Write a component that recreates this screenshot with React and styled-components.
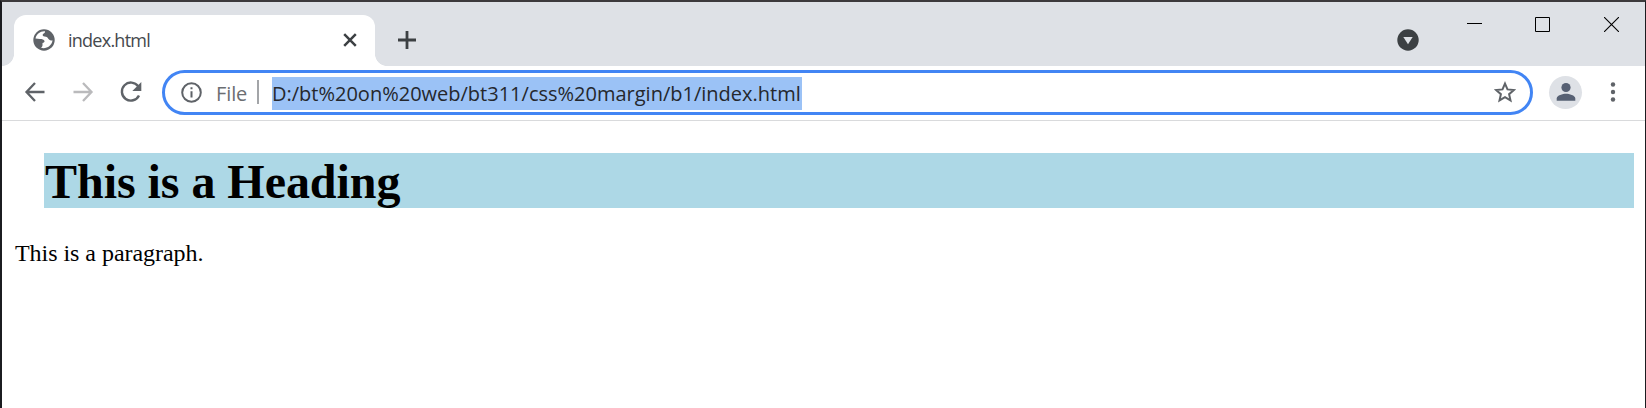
import React from "react";
import styled, { createGlobalStyle } from "styled-components";

const Global = createGlobalStyle`
  * { box-sizing: border-box; }
  body { margin: 0; background: #fff; }
`;
const ui = `"Open Sans", "Noto Sans", sans-serif`;

const Window = styled.div`
  height: 408px;
  display: flex;
  flex-direction: column;
  background: #fff;
  border: solid #1b1c20;
  border-width: 2px 1px 0 2px;
  border-top-color: #3c3a3c;
  overflow: hidden;
`;
const TabStrip = styled.header`
  height: 64px;
  display: flex;
  align-items: flex-end;
  background: #dee1e6;
`;
const Foot = styled.div`
  width: 12px;
  height: 12px;
  background: radial-gradient(circle at ${p => (p.$right ? "100%" : "0")} 0, transparent 11.6px, #fff 12.2px);
`;
const Tab = styled.div`
  width: 361px;
  height: 51px;
  padding: 0 18px 2px 18px;
  display: flex;
  align-items: center;
  background: #fff;
  border-radius: 12px 12px 0 0;
`;
const TabTitle = styled.span`
  flex: 1;
  margin-left: 12px;
  font: 18px/24px ${ui};
  letter-spacing: ${p => p.$track};
  color: #45494d;
`;
const NewTab = styled.div`
  margin-left: 8px;
  height: 51px;
  padding-bottom: 1px;
  display: flex;
  align-items: center;
`;
const Controls = styled.div`
  margin-left: auto;
  height: 64px;
  display: flex;
`;
const TabSearch = styled.div`
  padding: 27px 48px 0 0;
`;
const Control = styled.div`
  width: 15px;
  margin-right: ${p => p.$gap}px;
  padding-top: 15px;
`;
const Icon = styled.svg`
  display: block;
  flex: none;
`;
const Toolbar = styled.div`
  height: 55px;
  padding: 4px 29px 6px 22px;
  display: flex;
  align-items: center;
  border-bottom: 1px solid #d9dadc;
`;
const Nav = styled.div`
  display: flex;
  gap: 26px;
  margin-right: 20px;
`;
const Omnibox = styled.div`
  flex: 1;
  height: 45px;
  padding: 0 14px 0 16px;
  display: flex;
  align-items: center;
  border: 3px solid #4285f4;
  border-radius: 23px;
`;
const Scheme = styled.span`
  width: 31px;
  margin: 2px 0 0 14px;
  white-space: nowrap;
  font: 20px/33px ${ui};
  letter-spacing: ${p => p.$track};
  color: #6b6e72;
`;
const Divider = styled.span`
  width: 2px;
  height: 24px;
  margin: 0 13px 0 10px;
  background: #a3a5a8;
`;
const Url = styled.span`
  height: 33px;
  width: 530px;
  margin: 2px auto 0 0;
  white-space: nowrap;
  font: 20px/33px ${ui};
  letter-spacing: ${p => p.$track};
  background: #9bc2f6;
  color: #25282d;
`;
const Avatar = styled.div`
  width: 33px;
  height: 33px;
  margin: 0 28px 0 16px;
  display: flex;
  align-items: center;
  justify-content: center;
  border-radius: 50%;
  background: #dee1e6;
`;
const Page = styled.main`
  flex: 1;
  padding: 32px 11px 0 12px;
  font-family: "Liberation Serif", serif;
  color: #000;
`;
const Heading = styled.h1`
  height: 55px;
  margin: 0 0 0 30px;
  padding-left: 1px;
  font-size: 48px;
  line-height: 57px;
  letter-spacing: -0.04px;
  background: lightblue;
`;
const Paragraph = styled.p`
  margin: 32px 0 0 1px;
  font-size: 24px;
  line-height: 27px;
  letter-spacing: -0.04px;
`;

export default function App() {
  return (
    <>
      <Global />
      <Window>
        <TabStrip>
          <Foot />
          <Tab>
            <Icon width="24" height="24" viewBox="0 0 24 24">
              <circle cx="12" cy="12" r="10.7" fill="#5f6368" />
              <path d="M13 3.400C8.500 3 4.500 6 3.500 10.500L8 11c2 0 4 .5 4.500 2 .3 1-.8 1.700-2 2v2.300c0 1.200-.8 1.800-1.500 2.500 5 1.500 11-1.800 11.500-7.500-1.500.5-2.500 0-3.500-.8-1.200-1-1-2.500-3-2.800-2-.2-3.500-.3-3.300-2C10.900 5.300 13.500 4.800 13 3.400z" fill="#fff" />
            </Icon>
            <TabTitle $track="-0.75px">index.html</TabTitle>
            <Icon width="14" height="14" viewBox="0 0 14 14" fill="none" stroke="#3c4043" strokeWidth="2.5">
              <path d="M1.200 1.200l11.600 11.600M12.800 1.200L1.200 12.800" />
            </Icon>
          </Tab>
          <Foot $right />
          <NewTab>
            <Icon width="24" height="24" viewBox="0 0 24 24" stroke="#3c4043" strokeWidth="2.800">
              <path d="M12 3v18M3 12h18" />
            </Icon>
          </NewTab>
          <Controls>
            <TabSearch>
              <Icon width="22" height="22" viewBox="0 0 22 22">
                <circle cx="11" cy="11" r="10.700" fill="#3c4043" />
                <path d="M6.300 8h9.400L11 15.200z" fill="#dee1e6" />
              </Icon>
            </TabSearch>
            <Control $gap={53}>
              <Icon width="15" height="15"><path d="M0 6.500h15" stroke="#000" /></Icon>
            </Control>
            <Control $gap={54}>
              <Icon width="15" height="15"><path d="M.5.5h14v14H.5z" fill="none" stroke="#000" /></Icon>
            </Control>
            <Control $gap={26}>
              <Icon width="15" height="15"><path d="M0 0l15 15M15 0L0 15" stroke="#000" strokeWidth="1.1" /></Icon>
            </Control>
          </Controls>
        </TabStrip>
        <Toolbar>
          <Nav>
            <Icon width="22" height="22" viewBox="0 0 22 22" fill="none" stroke="#5f6368" strokeWidth="2.300">
              <path d="M20.500 11H2.800M11 2L2.500 11l8.500 9" />
            </Icon>
            <Icon width="22" height="22" viewBox="0 0 22 22" fill="none" stroke="#bababc" strokeWidth="2.300">
              <path d="M1.500 11h17.700M11 2l8.500 9-8.500 9" />
            </Icon>
            <Icon width="22" height="22" viewBox="0 0 22 22">
              <path d="M18.200 5.300A9 9 0 1 0 19 14.500" fill="none" stroke="#5f6368" strokeWidth="2.400" />
              <path d="M21.300 1v9h-9z" fill="#5f6368" />
            </Icon>
          </Nav>
          <Omnibox>
            <Icon width="21" height="21" viewBox="0 0 21 21">
              <circle cx="10.500" cy="10.500" r="9.300" fill="none" stroke="#5f6368" strokeWidth="2" />
              <path d="M9.500 5.300h2v2h-2zM9.500 9.200h2v6.300h-2z" fill="#5f6368" />
            </Icon>
            <Scheme $track="-0.1px">File</Scheme>
            <Divider />
            <Url $track="0px">D:/bt%20on%20web/bt311/css%20margin/b1/index.html</Url>
            <Icon width="22" height="22" viewBox="0 0 22 22" fill="none" stroke="#5f6368" strokeWidth="2">
              <path d="M11 2.600l2.500 5.800 6.400.6-4.800 4.200 1.400 6.200-5.500-3.200-5.500 3.200 1.400-6.200L2.100 9l6.400-.6z" />
            </Icon>
          </Omnibox>
          <Avatar>
            <Icon width="20" height="20" viewBox="0 0 20 20" fill="#566073">
              <circle cx="10" cy="5.500" r="4.600" />
              <path d="M.7 18.800v-2.300c0-3.100 6.200-4.700 9.300-4.700s9.300 1.600 9.300 4.700v2.300z" />
            </Icon>
          </Avatar>
          <Icon width="6" height="20" viewBox="0 0 6 20" fill="#5f6368">
            <circle cx="3" cy="2.500" r="2.200" /><circle cx="3" cy="10" r="2.200" /><circle cx="3" cy="17.500" r="2.200" />
          </Icon>
        </Toolbar>
        <Page>
          <Heading>This is a Heading</Heading>
          <Paragraph>This is a paragraph.</Paragraph>
        </Page>
      </Window>
    </>
  );
}
